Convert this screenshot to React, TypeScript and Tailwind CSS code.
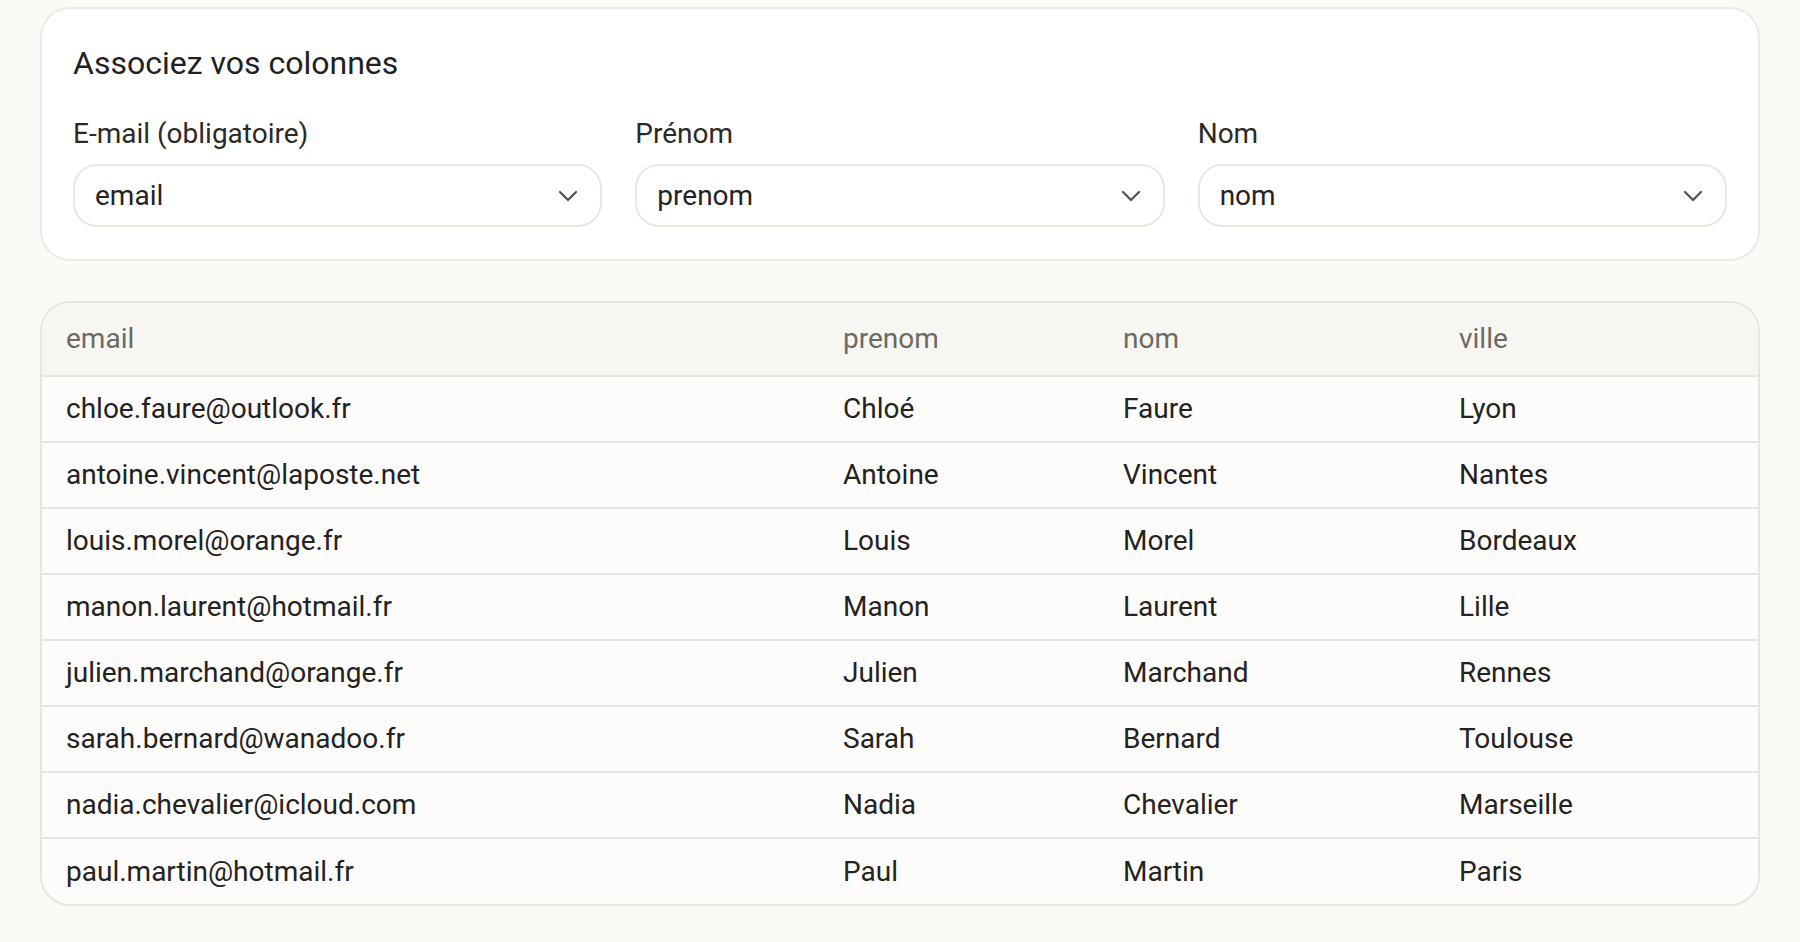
import React from 'react'
import { ChevronDown } from 'lucide-react'

interface Contact {
  email: string
  prenom: string
  nom: string
  ville: string
}

const rows: Contact[] = [
  { email: 'chloe.faure@outlook.fr', prenom: 'Chloé', nom: 'Faure', ville: 'Lyon' },
  { email: 'antoine.vincent@laposte.net', prenom: 'Antoine', nom: 'Vincent', ville: 'Nantes' },
  { email: 'louis.morel@orange.fr', prenom: 'Louis', nom: 'Morel', ville: 'Bordeaux' },
  { email: 'manon.laurent@hotmail.fr', prenom: 'Manon', nom: 'Laurent', ville: 'Lille' },
  { email: 'julien.marchand@orange.fr', prenom: 'Julien', nom: 'Marchand', ville: 'Rennes' },
  { email: 'sarah.bernard@wanadoo.fr', prenom: 'Sarah', nom: 'Bernard', ville: 'Toulouse' },
  { email: 'nadia.chevalier@icloud.com', prenom: 'Nadia', nom: 'Chevalier', ville: 'Marseille' },
  { email: 'paul.martin@hotmail.fr', prenom: 'Paul', nom: 'Martin', ville: 'Paris' }
]

const mappings = [
  { label: 'E-mail (obligatoire)', value: 'email' },
  { label: 'Prénom', value: 'prenom' },
  { label: 'Nom', value: 'nom' }
]

const ColumnSelect: React.FC<{ label: string; value: string }> = ({ label, value }) => (
  <div className="flex flex-col">
    <label className="text-[28px] leading-[36px] text-[#2b2a27] mb-[12px]">{label}</label>
    <div className="flex items-center justify-between h-[63px] rounded-[24px] border-2 border-[#e8e7e0] bg-white pl-[20px] pr-[16px]">
      <span className="text-[28px] text-[#24231f]">{value}</span>
      <ChevronDown className="w-[32px] h-[32px] text-[#55544f]" strokeWidth={1.75} />
    </div>
  </div>
)

export default function App() {
  return (
    <div
      className="min-h-screen bg-[#fbfaf7] px-[40px] pt-[7px] pb-10"
      style={{ fontFamily: 'Roboto, "Noto Sans", sans-serif' }}
    >
      <section className="rounded-[30px] border-2 border-[#ebeae5] bg-white px-[31px] pt-[34px] pb-[32px]">
        <h2 className="text-[32px] leading-[40px] text-[#22211e] mb-[33px]">Associez vos colonnes</h2>
        <div className="grid grid-cols-3 gap-[33px]">
          {mappings.map((m) => (
            <ColumnSelect key={m.value} label={m.label} value={m.value} />
          ))}
        </div>
      </section>

      <div className="mt-[40px] overflow-hidden rounded-[30px] border-2 border-[#e6e5df]">
        <table className="w-full table-fixed border-collapse text-[28px]">
          <colgroup>
            <col className="w-[777px]" />
            <col className="w-[280px]" />
            <col className="w-[336px]" />
            <col />
          </colgroup>
          <thead>
            <tr className="h-[73px] bg-[#f7f6f2] text-left">
              {['email', 'prenom', 'nom', 'ville'].map((h) => (
                <th key={h} className="px-[24px] font-normal text-[#6b6a63]">
                  {h}
                </th>
              ))}
            </tr>
          </thead>
          <tbody className="bg-[#fdfcfa] text-[#23221f]">
            {rows.map((r) => (
              <tr key={r.email} className="h-[66px] border-t-2 border-[#e6e5df]">
                <td className="px-[24px]">{r.email}</td>
                <td className="px-[24px]">{r.prenom}</td>
                <td className="px-[24px]">{r.nom}</td>
                <td className="px-[24px]">{r.ville}</td>
              </tr>
            ))}
          </tbody>
        </table>
      </div>
    </div>
  )
}
